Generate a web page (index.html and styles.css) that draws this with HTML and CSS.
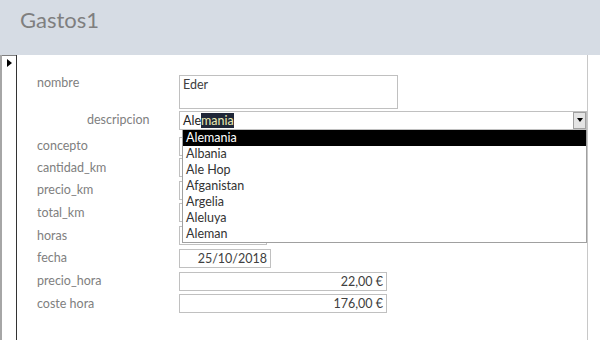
FILE: index.html
```html
<!DOCTYPE html>
<html lang="es">
<head>
    <meta charset="UTF-8">
    <title>Gastos1</title>
    <link rel="stylesheet" href="styles.css">
</head>
<body>
    <div class="form-header">
        <h1>Gastos1</h1>
    </div>
    <div class="detail">
        <div class="selector">
            <div class="current"><span class="arrow"></span></div>
        </div>
        <div class="fields">
            <div class="label top">nombre</div>
            <div class="box tall">Eder</div>

            <div class="label indent pull">descripcion</div>
            <div class="combo-wrap pull">
                <div class="box combo">
                    <span>Ale<span class="sel">mania</span></span>
                    <span class="drop-btn"><span class="tri"></span></span>
                </div>
                <ul class="droplist">
                    <li class="active">Alemania</li>
                    <li>Albania</li>
                    <li>Ale Hop</li>
                    <li>Afganistan</li>
                    <li>Argelia</li>
                    <li>Aleluya</li>
                    <li>Aleman</li>
                </ul>
            </div>

            <div class="label gap">concepto</div>
            <div class="box short gap"></div>
            <div class="label">cantidad_km</div>
            <div class="box short"></div>
            <div class="label">precio_km</div>
            <div class="box short"></div>
            <div class="label">total_km</div>
            <div class="box short"></div>
            <div class="label">horas</div>
            <div class="box short"></div>
            <div class="label">fecha</div>
            <div class="box date num">25/10/2018</div>
            <div class="label">precio_hora</div>
            <div class="box wide num">22,00 €</div>
            <div class="label">coste hora</div>
            <div class="box wide num">176,00 €</div>
        </div>
    </div>
</body>
</html>
```

FILE: styles.css
```css
body {
    margin: 0;
    font-family: Lato, "Liberation Sans", sans-serif;
    font-size: 12.5px;
    background: #fff;
    color: #404040;
}
.form-header {
    height: 55px;
    background-color: #d6dce4;
}
.form-header h1 {
    margin: 0;
    padding: 6px 0 0 20px;
    font-size: 22px;
    font-weight: normal;
    color: #7f7f7f;
    line-height: 28px;
}
.detail {
    display: flex;
    height: 285px;
    width: 588px;
    box-sizing: border-box;
    border-right: 1px solid #c8c8c8;
}
.selector {
    box-sizing: border-box;
    width: 17px;
    border-left: 2px solid #a6a6a6;
    border-right: 1px solid #333;
}
.current {
    height: 15px;
    border-top: 1px solid #808080;
    position: relative;
}
.arrow {
    position: absolute;
    left: 5px;
    top: 3px;
    border-left: 5px solid #000;
    border-top: 4px solid transparent;
    border-bottom: 4px solid transparent;
}
.fields {
    flex: 1;
    display: grid;
    grid-template-columns: 142px 1fr;
    grid-template-rows: 34px;
    grid-auto-rows: 19px;
    row-gap: 3.7px;
    align-items: center;
    align-content: start;
    padding: 20px 0 0 20px;
}
.label {
    color: #808080;
    line-height: 16px;
}
.label.top {
    align-self: start;
}
.indent {
    padding-left: 50px;
}
.pull {
    margin-top: -3.7px;
}
.box {
    box-sizing: border-box;
    height: 19px;
    border: 1px solid #c0c0c0;
    line-height: 17px;
    padding: 0 3px;
    background: #fff;
}
.tall {
    height: 34px;
    width: 219px;
    align-self: start;
    line-height: 16px;
    padding-top: 1px;
}
.combo-wrap {
    position: relative;
}
.combo {
    display: flex;
    justify-content: space-between;
    align-items: center;
    width: 408px;
    padding-right: 0;
    color: #222;
}
.sel {
    background: #1f2638;
    color: #ecebb4;
}
.drop-btn {
    width: 13px;
    height: 17px;
    box-sizing: border-box;
    border: 1px solid #a0a0a0;
    background: #e4e4e4;
    display: flex;
    align-items: center;
    justify-content: center;
}
.tri {
    border-top: 4px solid #000;
    border-left: 3.5px solid transparent;
    border-right: 3.5px solid transparent;
}
.droplist {
    position: absolute;
    top: 19px;
    left: 3px;
    width: 405px;
    margin: 0;
    padding: 0;
    list-style: none;
    box-sizing: border-box;
    border: 1px solid #a0a0a0;
    border-top: none;
    background: #fff;
    z-index: 2;
}
.droplist li {
    height: 16px;
    line-height: 16px;
    padding-left: 3px;
    color: #333;
}
.droplist li.active {
    background: #000;
    color: #fff;
}
.gap {
    margin-top: 2.3px;
}
.short {
    width: 88px;
}
.date {
    width: 92px;
}
.wide {
    width: 208px;
}
.num {
    text-align: right;
}
```
